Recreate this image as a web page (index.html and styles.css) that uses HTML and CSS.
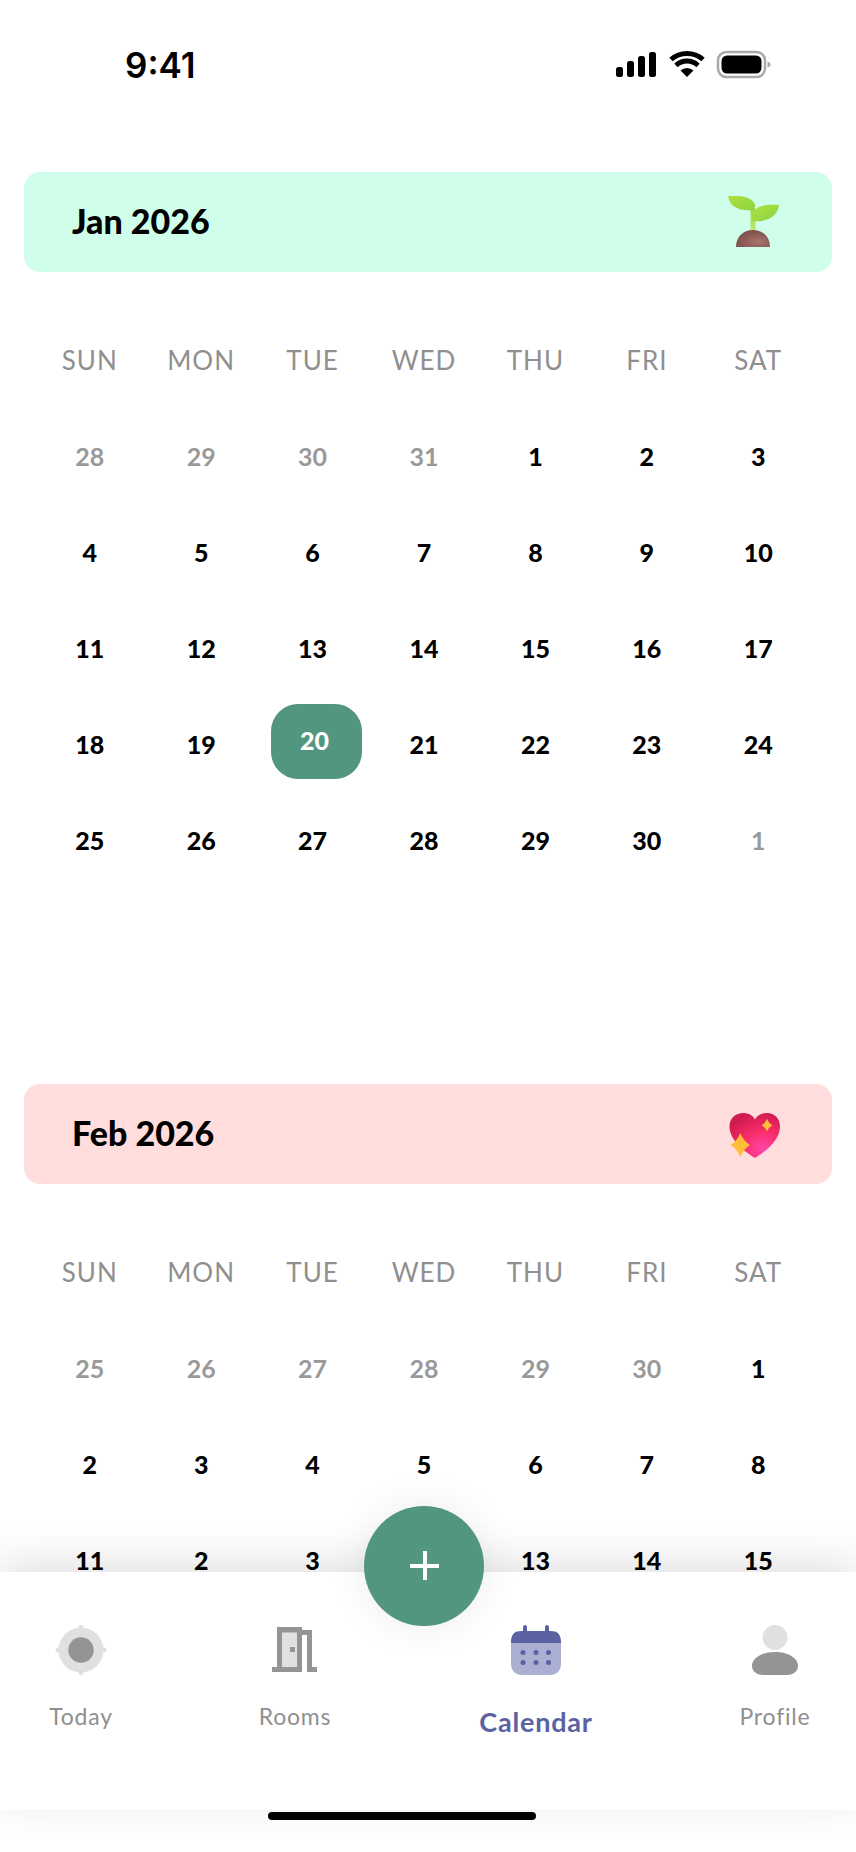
FILE: index.html
```html
<!DOCTYPE html>
<html lang="en">
<head>
    <meta charset="UTF-8">
    <meta name="viewport" content="width=device-width, initial-scale=1.0">
    <title>Calendar</title>
    <link rel="stylesheet" href="styles.css">
</head>
<body>
    <div class="status-bar">
        <span class="status-time">9:41</span>
        <svg class="status-icons" width="160" height="30" viewBox="0 0 160 30">
            <rect x="0" y="17" width="7" height="10" rx="2.5"/>
            <rect x="11" y="11" width="7" height="16" rx="2.5"/>
            <rect x="22" y="6" width="7" height="21" rx="2.5"/>
            <rect x="33" y="2" width="7" height="25" rx="2.5"/>
            <path d="M55 9.5a24 24 0 0 1 32 0M60 15.5a16 16 0 0 1 22 0" fill="none" stroke="#000" stroke-width="5"/>
            <path d="M64.500 20.500a9.500 9.500 0 0 1 13 0L71 27z"/>
            <rect x="102" y="2" width="47" height="25" rx="8.500" fill="none" stroke="#aaa" stroke-width="2.500"/>
            <rect x="105.500" y="5.500" width="40" height="18" rx="5.500"/>
            <path d="M151.500 11.500c2 .5 3 1.500 3 3s-1 2.500-3 3z" fill="#aaa"/>
        </svg>
    </div>

    <section class="month">
        <div class="month-head month-jan">
            <h2>Jan 2026</h2>
            <svg width="52" height="52" viewBox="0 0 52 52">
                <defs>
                    <linearGradient id="leaf" x1="0" y1="0" x2="1" y2="1">
                        <stop offset="0" stop-color="#b0e040"/>
                        <stop offset="1" stop-color="#8ad440"/>
                    </linearGradient>
                    <linearGradient id="stem" x1="0" y1="0" x2="0" y2="1">
                        <stop offset="0" stop-color="#94d84c"/>
                        <stop offset="1" stop-color="#bdee70"/>
                    </linearGradient>
                    <radialGradient id="soil" cx="0.65" cy="0.7" r="0.7">
                        <stop offset="0" stop-color="#a87370"/>
                        <stop offset="1" stop-color="#7c4f47"/>
                    </radialGradient>
                </defs>
                <path d="M22.500 12h5v24h-5z" fill="url(#stem)"/>
                <path d="M0 0C10-1 24 0 27 9c0 2-1 4-2 5C12 15 2 12 0 0z" fill="url(#leaf)"/>
                <path d="M51 9c-7-.5-19-1-24 5-2 2.500-3 6-3 11 9 1 19-1 24-8 1.500-2 2.500-4.500 3-8z" fill="url(#leaf)"/>
                <path d="M8 51c0-11 8-17 17-17s17 6 17 17z" fill="url(#soil)"/>
            </svg>
        </div>
        <div class="cal-grid">
            <div class="wd">SUN</div><div class="wd">MON</div><div class="wd">TUE</div><div class="wd">WED</div><div class="wd">THU</div><div class="wd">FRI</div><div class="wd">SAT</div>
            <div class="day off">28</div><div class="day off">29</div><div class="day off">30</div><div class="day off">31</div><div class="day">1</div><div class="day">2</div><div class="day">3</div>
            <div class="day">4</div><div class="day">5</div><div class="day">6</div><div class="day">7</div><div class="day">8</div><div class="day">9</div><div class="day">10</div>
            <div class="day">11</div><div class="day">12</div><div class="day">13</div><div class="day">14</div><div class="day">15</div><div class="day">16</div><div class="day">17</div>
            <div class="day">18</div><div class="day">19</div><div class="day"><span class="today-badge">20</span></div><div class="day">21</div><div class="day">22</div><div class="day">23</div><div class="day">24</div>
            <div class="day">25</div><div class="day">26</div><div class="day">27</div><div class="day">28</div><div class="day">29</div><div class="day">30</div><div class="day off">1</div>
        </div>
    </section>

    <section class="month">
        <div class="month-head month-feb">
            <h2>Feb 2026</h2>
            <svg width="52" height="52" viewBox="0 0 52 52">
                <defs>
                    <radialGradient id="heart" cx="0.65" cy="0.8" r="0.8">
                        <stop offset="0" stop-color="#ff45a8"/>
                        <stop offset="0.5" stop-color="#f82c68"/>
                        <stop offset="1" stop-color="#d01c50"/>
                    </radialGradient>
                </defs>
                <path d="M27 50C14 42 1.500 31 1.500 18.500 1.500 10 8 5 15 5c5 0 9.500 2 12 6.500C29.500 7 34 5 39 5c7 0 13 5 13 13.500C52 31 40 42 27 50z" fill="url(#heart)"/>
                <path d="M39 11Q40.800 15.500 44.500 17.300 40.800 19.100 39 23.500 37.200 19.100 33.500 17.300 37.200 15.500 39 11z" fill="#ffbe3a"/>
                <path d="M12.300 25Q15.500 33 22 37 15.500 41 12.300 49 9.100 41 2.600 37 9.100 33 12.300 25z" fill="#ffbe3a"/>
            </svg>
        </div>
        <div class="cal-grid">
            <div class="wd">SUN</div><div class="wd">MON</div><div class="wd">TUE</div><div class="wd">WED</div><div class="wd">THU</div><div class="wd">FRI</div><div class="wd">SAT</div>
            <div class="day off">25</div><div class="day off">26</div><div class="day off">27</div><div class="day off">28</div><div class="day off">29</div><div class="day off">30</div><div class="day">1</div>
            <div class="day">2</div><div class="day">3</div><div class="day">4</div><div class="day">5</div><div class="day">6</div><div class="day">7</div><div class="day">8</div>
            <div class="day">11</div><div class="day">2</div><div class="day">3</div><div class="day">12</div><div class="day">13</div><div class="day">14</div><div class="day">15</div>
        </div>
    </section>

    <nav class="tab-bar">
        <button class="fab" aria-label="Add"><span class="fab-plus"></span></button>
        <div class="tab">
            <svg width="52" height="50" viewBox="0 0 52 50">
                <circle cx="26" cy="25" r="22.500" fill="#e0e0e0"/>
                <circle cx="26" cy="2.500" r="2.500" fill="#e0e0e0"/>
                <circle cx="26" cy="47.500" r="2.500" fill="#e0e0e0"/>
                <circle cx="3" cy="25" r="2.500" fill="#e0e0e0"/>
                <circle cx="49" cy="25" r="2.500" fill="#e0e0e0"/>
                <circle cx="26" cy="25" r="12.700" fill="#949492"/>
            </svg>
            <span>Today</span>
        </div>
        <div class="tab">
            <svg width="46" height="50" viewBox="0 0 46 50">
                <rect x="10" y="7" width="16" height="36" fill="#e0e0e0"/>
                <path d="M5 2h25v3h10v37h5v5H35V10h-5v37H0v-5h5zM10 7.500V42h15V7.500z" fill="#949492"/>
                <rect x="18" y="22" width="5" height="5" fill="#949492"/>
            </svg>
            <span>Rooms</span>
        </div>
        <div class="tab tab-active">
            <svg width="50" height="50" viewBox="0 0 50 50">
                <path d="M0 18h50v20c0 8-4 12-12 12H12C4 50 0 46 0 38z" fill="#abafd1"/>
                <path d="M0 18v-1C0 9 4 6 10 6h2V2a2 2 0 0 1 4 0v4h18V2a2 2 0 0 1 4 0v4h2c6 0 10 3 10 11v1z" fill="#5a62a3"/>
                <g fill="#5a62a3">
                    <circle cx="12" cy="27.500" r="2.500"/><circle cx="25" cy="27.500" r="2.500"/><circle cx="37.500" cy="27.500" r="2.500"/>
                    <circle cx="12" cy="37.500" r="2.500"/><circle cx="25" cy="37.500" r="2.500"/><circle cx="37.500" cy="37.500" r="2.500"/>
                </g>
            </svg>
            <span>Calendar</span>
        </div>
        <div class="tab tab-profile">
            <svg width="46" height="50" viewBox="0 0 46 50">
                <circle cx="23" cy="12.500" r="12.500" fill="#e0e0e0"/>
                <path d="M0 41C0 33 10 27 23 27s23 6 23 14c0 6-6 9-11 9H11C6 50 0 47 0 41z" fill="#949492"/>
            </svg>
            <span>Profile</span>
        </div>
    </nav>
    <div class="home-indicator"></div>
</body>
</html>
```

FILE: styles.css
```css
* {
    box-sizing: border-box;
}

html, body {
    margin: 0;
    height: 1852px;
    overflow: hidden;
}

body {
    position: relative;
    background: #fff;
    color: #000;
    font-family: "Lato", sans-serif;
}

.status-bar {
    height: 172px;
    padding: 46px 0 0 125px;
    display: flex;
    justify-content: space-between;
    align-items: flex-start;
}

.status-time {
    font-family: "Inter", sans-serif;
    font-size: 35px;
    font-weight: 600;
    line-height: 38px;
}

.status-icons {
    margin: 4px 80px 0 0;
}

.month + .month {
    margin-top: 196px;
}

.month-head {
    margin: 0 24px;
    height: 100px;
    border-radius: 16px;
    padding: 0 52px 0 48px;
    display: flex;
    align-items: center;
    justify-content: space-between;
}

.month-head h2 {
    margin: 0 0 3px;
    font-size: 34px;
    font-weight: 900;
    line-height: 1;
}

.month-jan {
    background: #cffeea;
}

.month-feb {
    background: #ffdddd;
}

.cal-grid {
    margin: 40px 42px 0 34px;
    display: grid;
    grid-template-columns: repeat(7, 1fr);
    grid-auto-rows: 96px;
}

.wd, .day {
    display: flex;
    align-items: center;
    justify-content: center;
}

.wd {
    font-size: 26px;
    letter-spacing: 1px;
    color: #8f8f8f;
}

.day {
    font-size: 25px;
    font-weight: 900;
}

.day.off {
    color: #999;
    font-weight: 700;
}

.today-badge {
    width: 91px;
    height: 75px;
    margin: -6px -8px 0 0;
    border-radius: 27px;
    background: #529680;
    color: #fff;
    display: flex;
    align-items: center;
    justify-content: center;
    padding: 0 4px 2px 0;
    flex: none;
}

/* bottom nav sits over the calendar */
.tab-bar {
    position: absolute;
    left: 0;
    right: 0;
    top: 1572px;
    height: 238px;
    background: #fff;
    box-shadow: 0 -10px 40px rgba(0, 0, 0, 0.12);
    display: grid;
    grid-template-columns: 162px 266px 216px 212px;
    align-items: start;
    padding-top: 53px;
}

.fab {
    position: absolute;
    left: 364px;
    top: -66px;
    width: 120px;
    height: 120px;
    border: none;
    border-radius: 50%;
    background: #529680;
    box-shadow: 0 0 40px rgba(0, 0, 0, 0.08);
}

.fab-plus {
    position: absolute;
    left: 46px;
    top: 45px;
    width: 29px;
    height: 29px;
    background:
        linear-gradient(#fff, #fff) center / 4px 100% no-repeat,
        linear-gradient(#fff, #fff) center / 100% 4px no-repeat;
    border-radius: 2px;
}

.tab {
    display: flex;
    flex-direction: column;
    align-items: center;
    gap: 27px;
    font-size: 23px;
    letter-spacing: 0.8px;
    line-height: 28px;
    color: #8f8f8f;
}

.tab svg {
    display: block;
}

.tab-active {
    color: #5a62a3;
    font-size: 27px;
    font-weight: 700;
    gap: 33px;
}

.tab-profile {
    padding-left: 50px;
}

.home-indicator {
    position: absolute;
    left: 268px;
    top: 1812px;
    width: 268px;
    height: 8px;
    border-radius: 4px;
    background: #000;
}
```
